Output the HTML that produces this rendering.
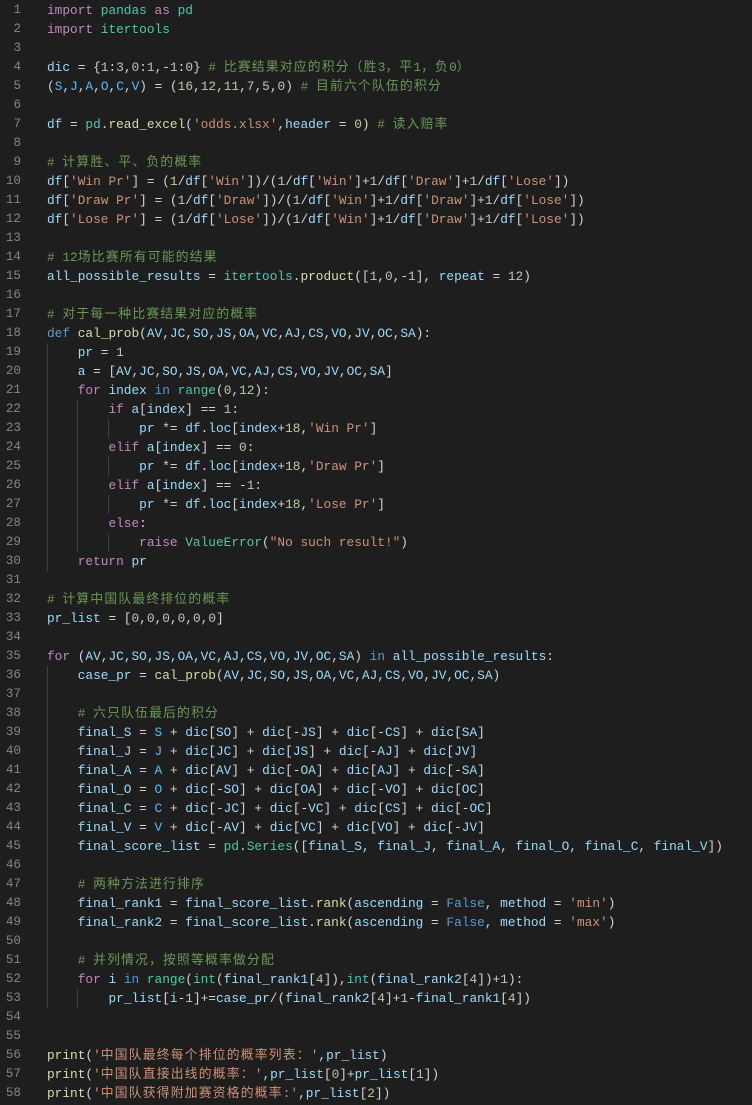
<!DOCTYPE html>
<html><head><meta charset="utf-8"><style>
html,body{margin:0;padding:0;background:#1e1e1e;width:752px;height:1105px;overflow:hidden}
#w{position:relative;padding-top:1px;font-family:"Liberation Mono","Noto Sans CJK SC",monospace;font-size:12.8px;line-height:19px;color:#d4d4d4}
.l{height:19px;white-space:pre;position:relative}
.n{position:absolute;left:0;width:21px;text-align:right;color:#858585;font-size:12.6px}
.c0{position:absolute;left:47px}
.z{letter-spacing:1.2px}
.k{color:#c586c0}.b{color:#569cd6}.t{color:#4ec9b0}.v{color:#9cdcfe}.s{color:#ce9178}.m{color:#b5cea8}.c{color:#6a9955}.f{color:#dcdcaa}.o{color:#4fc1ff}
.g{position:absolute;width:1px;background:#404040}
</style></head><body><div id="w">
<div class="g" style="left:47px;top:343px;height:228px"></div>
<div class="g" style="left:77px;top:400px;height:152px"></div>
<div class="g" style="left:108px;top:419px;height:19px"></div>
<div class="g" style="left:108px;top:457px;height:19px"></div>
<div class="g" style="left:108px;top:495px;height:19px"></div>
<div class="g" style="left:108px;top:533px;height:19px"></div>
<div class="g" style="left:47px;top:666px;height:342px"></div>
<div class="g" style="left:77px;top:989px;height:19px"></div>
</div>
<script>
const L=[
'<k>import</k> <t>pandas</t> <k>as</k> <t>pd</t>',
'<k>import</k> <t>itertools</t>',
'',
'<v>dic</v> = {<m>1</m>:<m>3</m>,<m>0</m>:<m>1</m>,-<m>1</m>:<m>0</m>} <c># 比赛结果对应的积分（胜3，平1，负0）</c>',
'(<o>S</o>,<o>J</o>,<o>A</o>,<o>O</o>,<o>C</o>,<o>V</o>) = (<m>16</m>,<m>12</m>,<m>11</m>,<m>7</m>,<m>5</m>,<m>0</m>) <c># 目前六个队伍的积分</c>',
'',
'<v>df</v> = <t>pd</t>.<f>read_excel</f>(<s>\'odds.xlsx\'</s>,<v>header</v> = <m>0</m>) <c># 读入赔率</c>',
'',
'<c># 计算胜、平、负的概率</c>',
'<v>df</v>[<s>\'Win Pr\'</s>] = (<m>1</m>/<v>df</v>[<s>\'Win\'</s>])/(<m>1</m>/<v>df</v>[<s>\'Win\'</s>]+<m>1</m>/<v>df</v>[<s>\'Draw\'</s>]+<m>1</m>/<v>df</v>[<s>\'Lose\'</s>])',
'<v>df</v>[<s>\'Draw Pr\'</s>] = (<m>1</m>/<v>df</v>[<s>\'Draw\'</s>])/(<m>1</m>/<v>df</v>[<s>\'Win\'</s>]+<m>1</m>/<v>df</v>[<s>\'Draw\'</s>]+<m>1</m>/<v>df</v>[<s>\'Lose\'</s>])',
'<v>df</v>[<s>\'Lose Pr\'</s>] = (<m>1</m>/<v>df</v>[<s>\'Lose\'</s>])/(<m>1</m>/<v>df</v>[<s>\'Win\'</s>]+<m>1</m>/<v>df</v>[<s>\'Draw\'</s>]+<m>1</m>/<v>df</v>[<s>\'Lose\'</s>])',
'',
'<c># 12场比赛所有可能的结果</c>',
'<v>all_possible_results</v> = <t>itertools</t>.<f>product</f>([<m>1</m>,<m>0</m>,-<m>1</m>], <v>repeat</v> = <m>12</m>)',
'',
'<c># 对于每一种比赛结果对应的概率</c>',
'<b>def</b> <f>cal_prob</f>(<v>AV</v>,<v>JC</v>,<v>SO</v>,<v>JS</v>,<v>OA</v>,<v>VC</v>,<v>AJ</v>,<v>CS</v>,<v>VO</v>,<v>JV</v>,<v>OC</v>,<v>SA</v>):',
'    <v>pr</v> = <m>1</m>',
'    <v>a</v> = [<v>AV</v>,<v>JC</v>,<v>SO</v>,<v>JS</v>,<v>OA</v>,<v>VC</v>,<v>AJ</v>,<v>CS</v>,<v>VO</v>,<v>JV</v>,<v>OC</v>,<v>SA</v>]',
'    <k>for</k> <v>index</v> <b>in</b> <t>range</t>(<m>0</m>,<m>12</m>):',
'        <k>if</k> <v>a</v>[<v>index</v>] == <m>1</m>:',
'            <v>pr</v> *= <v>df</v>.<v>loc</v>[<v>index</v>+<m>18</m>,<s>\'Win Pr\'</s>]',
'        <k>elif</k> <v>a</v>[<v>index</v>] == <m>0</m>:',
'            <v>pr</v> *= <v>df</v>.<v>loc</v>[<v>index</v>+<m>18</m>,<s>\'Draw Pr\'</s>]',
'        <k>elif</k> <v>a</v>[<v>index</v>] == -<m>1</m>:',
'            <v>pr</v> *= <v>df</v>.<v>loc</v>[<v>index</v>+<m>18</m>,<s>\'Lose Pr\'</s>]',
'        <k>else</k>:',
'            <k>raise</k> <t>ValueError</t>(<s>"No such result!"</s>)',
'    <k>return</k> <v>pr</v>',
'',
'<c># 计算中国队最终排位的概率</c>',
'<v>pr_list</v> = [<m>0</m>,<m>0</m>,<m>0</m>,<m>0</m>,<m>0</m>,<m>0</m>]',
'',
'<k>for</k> (<v>AV</v>,<v>JC</v>,<v>SO</v>,<v>JS</v>,<v>OA</v>,<v>VC</v>,<v>AJ</v>,<v>CS</v>,<v>VO</v>,<v>JV</v>,<v>OC</v>,<v>SA</v>) <b>in</b> <v>all_possible_results</v>:',
'    <v>case_pr</v> = <f>cal_prob</f>(<v>AV</v>,<v>JC</v>,<v>SO</v>,<v>JS</v>,<v>OA</v>,<v>VC</v>,<v>AJ</v>,<v>CS</v>,<v>VO</v>,<v>JV</v>,<v>OC</v>,<v>SA</v>)',
'',
'    <c># 六只队伍最后的积分</c>',
'    <v>final_S</v> = <o>S</o> + <v>dic</v>[<v>SO</v>] + <v>dic</v>[-<v>JS</v>] + <v>dic</v>[-<v>CS</v>] + <v>dic</v>[<v>SA</v>]',
'    <v>final_J</v> = <o>J</o> + <v>dic</v>[<v>JC</v>] + <v>dic</v>[<v>JS</v>] + <v>dic</v>[-<v>AJ</v>] + <v>dic</v>[<v>JV</v>]',
'    <v>final_A</v> = <o>A</o> + <v>dic</v>[<v>AV</v>] + <v>dic</v>[-<v>OA</v>] + <v>dic</v>[<v>AJ</v>] + <v>dic</v>[-<v>SA</v>]',
'    <v>final_O</v> = <o>O</o> + <v>dic</v>[-<v>SO</v>] + <v>dic</v>[<v>OA</v>] + <v>dic</v>[-<v>VO</v>] + <v>dic</v>[<v>OC</v>]',
'    <v>final_C</v> = <o>C</o> + <v>dic</v>[-<v>JC</v>] + <v>dic</v>[-<v>VC</v>] + <v>dic</v>[<v>CS</v>] + <v>dic</v>[-<v>OC</v>]',
'    <v>final_V</v> = <o>V</o> + <v>dic</v>[-<v>AV</v>] + <v>dic</v>[<v>VC</v>] + <v>dic</v>[<v>VO</v>] + <v>dic</v>[-<v>JV</v>]',
'    <v>final_score_list</v> = <t>pd</t>.<t>Series</t>([<v>final_S</v>, <v>final_J</v>, <v>final_A</v>, <v>final_O</v>, <v>final_C</v>, <v>final_V</v>])',
'',
'    <c># 两种方法进行排序</c>',
'    <v>final_rank1</v> = <v>final_score_list</v>.<f>rank</f>(<v>ascending</v> = <b>False</b>, <v>method</v> = <s>\'min\'</s>)',
'    <v>final_rank2</v> = <v>final_score_list</v>.<f>rank</f>(<v>ascending</v> = <b>False</b>, <v>method</v> = <s>\'max\'</s>)',
'',
'    <c># 并列情况，按照等概率做分配</c>',
'    <k>for</k> <v>i</v> <b>in</b> <t>range</t>(<t>int</t>(<v>final_rank1</v>[<m>4</m>]),<t>int</t>(<v>final_rank2</v>[<m>4</m>])+<m>1</m>):',
'        <v>pr_list</v>[<v>i</v>-<m>1</m>]+=<v>case_pr</v>/(<v>final_rank2</v>[<m>4</m>]+<m>1</m>-<v>final_rank1</v>[<m>4</m>])',
'',
'',
'<f>print</f>(<s>\'中国队最终每个排位的概率列表：\'</s>,<v>pr_list</v>)',
'<f>print</f>(<s>\'中国队直接出线的概率：\'</s>,<v>pr_list</v>[<m>0</m>]+<v>pr_list</v>[<m>1</m>])',
'<f>print</f>(<s>\'中国队获得附加赛资格的概率:\'</s>,<v>pr_list</v>[<m>2</m>])'
];
const w=document.getElementById('w');
L.forEach((s,i)=>{const d=document.createElement('div');d.className='l';
let h=s.replace(/([\u3000-\u9fff\uff00-\uffef]+)/g,'<z>$1</z>');
h=h.replace(/<(\w)>/g,'<span class="$1">').replace(/<\/\w>/g,'</span>');
d.innerHTML='<span class="n">'+(i+1)+'</span><span class="c0">'+h+'</span>';w.appendChild(d);});
</script>
</body></html>
